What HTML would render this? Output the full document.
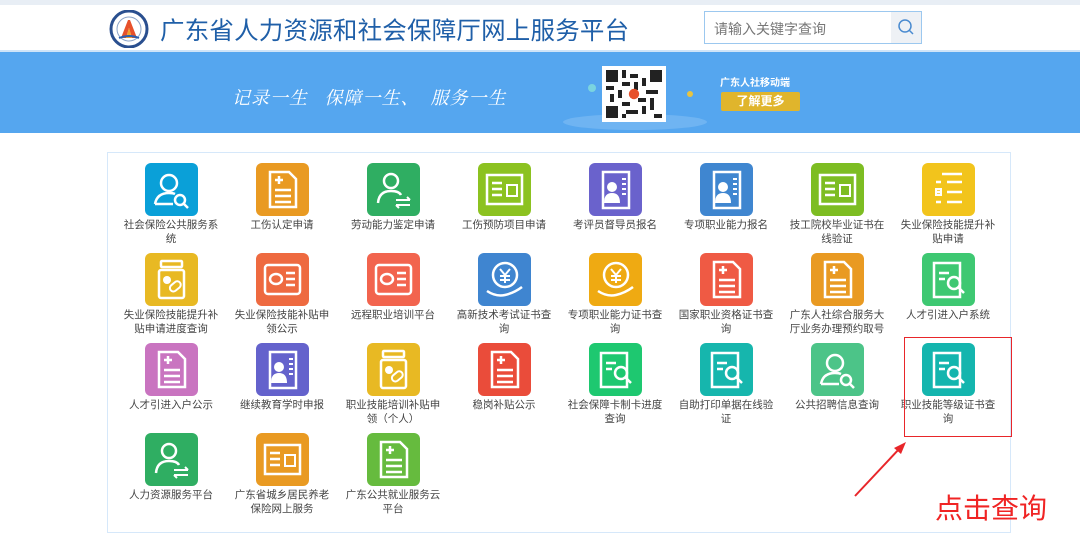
<!DOCTYPE html>
<html><head><meta charset="utf-8"><style>
*{margin:0;padding:0;box-sizing:border-box}
body{width:1080px;height:541px;background:#fff;position:relative;overflow:hidden;font-family:"Liberation Sans","Noto Sans CJK SC",sans-serif}
.top{position:absolute;left:0;top:0;width:1080px;height:5px;background:#e8eef5}
.title{position:absolute;left:160px;top:12px;font-size:24.5px;color:#1f5fa8;letter-spacing:0.2px}
.search{position:absolute;left:704px;top:11px;width:218px;height:33px;border:1px solid #9cc8ef;background:#fff}
.search span{position:absolute;left:9px;top:7px;font-size:14px;color:#777}
.search i{position:absolute;right:0;top:0;width:30px;height:31px;background:#eef1f5}
.banner{position:absolute;left:0;top:50px;width:1080px;height:83px;background:#55a6ef;border-top:2px solid #cfe4f8}
.slogan{position:absolute;left:232px;top:32px;color:#fff;font-size:18px;font-style:italic;font-family:"Liberation Serif","Noto Serif CJK SC",serif;letter-spacing:1px}
.qr{position:absolute;left:602px;top:14px;width:64px;height:56px;background:#fff;padding:4px}
.mob{position:absolute;left:720px;top:22px;color:#fff;font-size:10px;font-weight:bold}
.btn{position:absolute;left:721px;top:40px;width:79px;height:19px;background:#e0b52c;color:#fff;font-size:12px;text-align:center;line-height:19px;border-radius:2px;font-weight:bold}
.panel{position:absolute;left:107px;top:152px;width:904px;height:381px;border:1px solid #d6e8fa}
.ic{position:absolute;width:53px;height:53px;border-radius:6px}
.ic svg{position:absolute;left:0;top:0}
.lb{position:absolute;width:98px;text-align:center;font-size:10.5px;line-height:14px;color:#444}
.redbox{position:absolute;left:904px;top:337px;width:108px;height:100px;border:1.5px solid #e8262a}
.hint{position:absolute;left:935px;top:487px;font-size:28px;color:#f02424}
</style></head><body>
<div class="top"></div>
<svg style="position:absolute;left:107px;top:10px" width="44" height="38" viewBox="0 0 44 38"><circle cx="22" cy="19" r="18" fill="#fff" stroke="#2a4f8f" stroke-width="3"/><circle cx="22" cy="19" r="12" fill="#fff" stroke="#8aa3c8" stroke-width="1"/><path d="M14 28 L21 10 L23 10 L30 28 L25 28 L22 18 L19 28Z" fill="#e7512b"/><path d="M19 28 L22 18 L25 28Z" fill="#f2a12b"/><path d="M12 28 Q22 24 32 28" stroke="#2a5fb0" stroke-width="2" fill="none"/></svg>
<div class="title">广东省人力资源和社会保障厅网上服务平台</div>
<div class="search"><span>请输入关键字查询</span><i><svg width="30" height="31"><circle cx="14" cy="14" r="6" fill="none" stroke="#4a8bd0" stroke-width="1.5"/><line x1="18" y1="18" x2="22" y2="22" stroke="#4a8bd0" stroke-width="1.5"/></svg></i></div>
<div class="banner">
<div class="slogan">记录一生&nbsp;&nbsp;&nbsp;保障一生、&nbsp;&nbsp;服务一生</div>
<svg style="position:absolute;left:550px;top:8px" width="170" height="75"><ellipse cx="85" cy="62" rx="72" ry="8" fill="#6fb4f2"/><circle cx="42" cy="28" r="4" fill="#7ad4e0"/><circle cx="56" cy="36" r="3" fill="#8b6fd0"/><circle cx="140" cy="34" r="3" fill="#e8c440"/></svg>
<div class="qr"><svg width="56" height="48" viewBox="0 0 14 12"><rect width="14" height="12" fill="#fff"/><g fill="#222"><rect x="0" y="0" width="3" height="3"/><rect x="11" y="0" width="3" height="3"/><rect x="0" y="9" width="3" height="3"/><rect x="4" y="0" width="1" height="2"/><rect x="6" y="1" width="2" height="1"/><rect x="9" y="2" width="1" height="2"/><rect x="4" y="3" width="2" height="1"/><rect x="7" y="3" width="1" height="2"/><rect x="0" y="4" width="2" height="1"/><rect x="3" y="5" width="1" height="2"/><rect x="10" y="5" width="3" height="1"/><rect x="1" y="6" width="1" height="2"/><rect x="8" y="7" width="2" height="1"/><rect x="11" y="7" width="1" height="3"/><rect x="4" y="8" width="2" height="1"/><rect x="5" y="10" width="3" height="1"/><rect x="9" y="9" width="1" height="2"/><rect x="12" y="11" width="2" height="1"/><rect x="4" y="11" width="1" height="1"/></g><circle cx="7" cy="6" r="1.3" fill="#e7512b"/></svg></div>
<div class="mob">广东人社移动端</div>
<div class="btn">了解更多</div>
</div>
<div class="panel"></div>
<div id="g"></div>
<div class="redbox"></div>
<svg style="position:absolute;left:850px;top:440px" width="60" height="60"><line x1="5" y1="56" x2="50" y2="8" stroke="#e8262a" stroke-width="2"/><path d="M56 2 L44 8 L51 14Z" fill="#e8262a"/></svg>
<div class="hint">点击查询</div>
<script>
var items=[
["#0aa0d8","社会保险公共服务系统",0],["#e99a22","工伤认定申请",1],["#2fae62","劳动能力鉴定申请",2],["#8cc220","工伤预防项目申请",3],["#6a62cc","考评员督导员报名",4],["#3f86d0","专项职业能力报名",4],["#7dbd22","技工院校毕业证书在线验证",3],["#f2c41c","失业保险技能提升补贴申请",5],
["#e8b923","失业保险技能提升补贴申请进度查询",6],["#ee6a40","失业保险技能补贴申领公示",7],["#f2644e","远程职业培训平台",7],["#3f85d0","高新技术考试证书查询",8],["#efaa12","专项职业能力证书查询",8],["#ef5a44","国家职业资格证书查询",1],["#e99a22","广东人社综合服务大厅业务办理预约取号",1],["#3ec872","人才引进入户系统",9],
["#c974c0","人才引进入户公示",1],["#6462cc","继续教育学时申报",4],["#e8b923","职业技能培训补贴申领（个人）",6],["#ea4c3a","稳岗补贴公示",1],["#1ec870","社会保障卡制卡进度查询",9],["#16b6ad","自助打印单据在线验证",9],["#4cc488","公共招聘信息查询",0],["#14b5ae","职业技能等级证书查询",9],
["#2fae62","人力资源服务平台",2],["#e99a22","广东省城乡居民养老保险网上服务",3],["#66bb3e","广东公共就业服务云平台",1]];
var glyph=[
'<circle cx="24" cy="20" r="8" fill="none" stroke="#fff" stroke-width="2.5"/><path d="M10 41 Q12 30 24 30 Q28 30 30 31" fill="none" stroke="#fff" stroke-width="2.5"/><path d="M10 41 H28" stroke="#fff" stroke-width="2.5"/><circle cx="35" cy="37" r="5" fill="none" stroke="#fff" stroke-width="2.5"/><line x1="39" y1="41" x2="43" y2="45" stroke="#fff" stroke-width="2.5"/>',
'<path d="M14 9 H33 L40 16 V44 H14Z" fill="none" stroke="#fff" stroke-width="2.5"/><path d="M19 17 H27 M23 13 V21 M19 27 H35 M19 33 H35 M19 39 H35" stroke="#fff" stroke-width="2.5"/>',
'<circle cx="24" cy="18" r="7" fill="none" stroke="#fff" stroke-width="2.5"/><path d="M11 40 Q12 28 24 28 Q32 28 34 32" fill="none" stroke="#fff" stroke-width="2.5"/><path d="M29 37 H43 M40 34 L43 37 M43 42 H29 M32 45 L29 42" fill="none" stroke="#fff" stroke-width="2"/>',
'<rect x="9" y="12" width="35" height="29" fill="none" stroke="#fff" stroke-width="2.5"/><path d="M14 20 H24 M14 26 H24 M14 32 H24" stroke="#fff" stroke-width="2.5"/><rect x="29" y="22" width="10" height="11" fill="none" stroke="#fff" stroke-width="2"/>',
'<rect x="14" y="9" width="26" height="36" fill="none" stroke="#fff" stroke-width="2.5"/><circle cx="23" cy="24" r="5" fill="#fff"/><path d="M15 40 Q15 30 23 30 Q31 30 31 40Z" fill="#fff"/><path d="M33 16 H37 M33 21 H37 M33 26 H37 M33 31 H37" stroke="#fff" stroke-width="2"/>',
'<path d="M20 11 H40 M14 19 H19 M25 19 H40 M14 29 H19 M25 29 H40 M14 39 H19 M25 39 H40" stroke="#fff" stroke-width="2.5"/><rect x="14" y="26" width="5" height="6" fill="none" stroke="#fff" stroke-width="2"/>',
'<rect x="16" y="8" width="21" height="6" rx="1" fill="none" stroke="#fff" stroke-width="2.5"/><rect x="14" y="17" width="25" height="28" rx="2" fill="none" stroke="#fff" stroke-width="2.5"/><circle cx="22" cy="27" r="4" fill="#fff"/><rect x="24" y="30" width="12" height="7" rx="3.5" transform="rotate(-40 30 33)" fill="none" stroke="#fff" stroke-width="2"/>',
'<rect x="9" y="12" width="35" height="29" rx="3" fill="none" stroke="#fff" stroke-width="2.5"/><ellipse cx="20" cy="26" rx="6" ry="5" fill="none" stroke="#fff" stroke-width="2.5"/><path d="M30 20 H39 M30 26 H39 M30 32 H39" stroke="#fff" stroke-width="2.5"/>',
'<circle cx="27" cy="22" r="12" fill="none" stroke="#fff" stroke-width="2.5"/><path d="M22 16 L27 22 L32 16 M27 22 V30 M22 23 H32 M22 27 H32" stroke="#fff" stroke-width="2" fill="none"/><path d="M9 38 Q18 44 27 42 Q36 40 44 34" fill="none" stroke="#fff" stroke-width="2.5"/>',
'<path d="M12 10 H38 V44 H12Z" fill="none" stroke="#fff" stroke-width="2.5"/><path d="M17 20 H27 M17 26 H23" stroke="#fff" stroke-width="2.5"/><circle cx="32" cy="30" r="6" fill="none" stroke="#fff" stroke-width="2.5"/><line x1="36" y1="34" x2="42" y2="40" stroke="#fff" stroke-width="2.5"/>'];
var h='';
items.forEach(function(it,i){var c=i%8,r=Math.floor(i/8);var x=145+c*111,y=163+r*90;
h+='<div class="ic" style="left:'+x+'px;top:'+y+'px;background:'+it[0]+'"><svg width="53" height="53" viewBox="0 0 53 53">'+glyph[it[2]]+'</svg></div>';
h+='<div class="lb" style="left:'+(x+26-49)+'px;top:'+(y+55)+'px">'+it[1]+'</div>';});
document.getElementById('g').innerHTML=h;
</script>
</body></html>
